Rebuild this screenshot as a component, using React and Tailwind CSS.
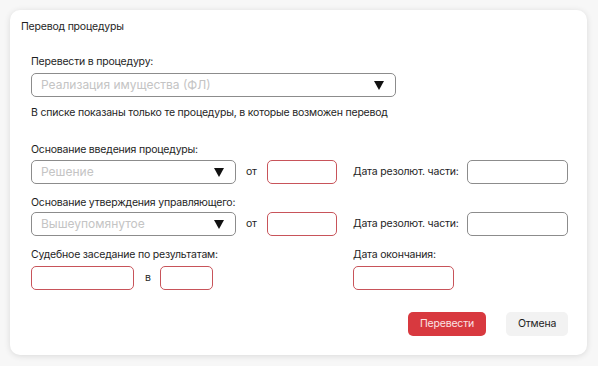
import React from "react";

const font = { fontFamily: "Inter, 'Noto Sans', sans-serif" };

function Arrow() {
  return (
    <svg width="10" height="9" viewBox="0 0 10 9" className="shrink-0">
      <path d="M0 0 H10 L5 9 Z" fill="#111" />
    </svg>
  );
}

function Select({ w, text }) {
  return (
    <div className={`${w} h-[24px] border border-[#8c8c8c] rounded-[5px] flex items-center justify-between pl-[9px] pr-[11px]`}>
      <span className="text-[12px] tracking-normal text-[#c4c4c4]">{text}</span>
      <Arrow />
    </div>
  );
}

function RedInput({ w }) {
  return <div className={`${w} h-[24px] border border-[#c8545a] rounded-[5px]`} />;
}

function GrayInput({ w }) {
  return <div className={`${w} h-[24px] border border-[#8c8c8c] rounded-[5px]`} />;
}

export default function App() {
  return (
    <div className="w-[598px] h-[366px] bg-[#f7f7f7] pt-[10px] pl-[10px]" style={font}>
      <div className="w-[577px] h-[345px] bg-white rounded-[10px] shadow-[0_1px_6px_rgba(0,0,0,0.12)] text-[#1e1e1e] text-[10.5px] tracking-[-0.2px] leading-[14px] whitespace-nowrap">
        <div className="pl-[11px] pt-[10px]">Перевод процедуры</div>
        <div className="pl-[21px]">
          <div className="mt-[21px]">Перевести в процедуру:</div>
          <div className="mt-[4px]">
            <Select w="w-[365px]" text="Реализация имущества (ФЛ)" />
          </div>
          <div className="mt-[9px]">В списке показаны только те процедуры, в которые возможен перевод</div>

          <div className="mt-[23px]">Основание введения процедуры:</div>
          <div className="mt-[3px] flex items-center">
            <Select w="w-[205px]" text="Решение" />
            <span className="ml-[10px] w-[21px]">от</span>
            <RedInput w="w-[70px]" />
            <span className="ml-[16px] w-[114px]">Дата резолют. части:</span>
            <GrayInput w="w-[101px]" />
          </div>

          <div className="mt-[12px]">Основание утверждения управляющего:</div>
          <div className="mt-[2px] flex items-center">
            <Select w="w-[205px]" text="Вышеупомянутое" />
            <span className="ml-[10px] w-[21px]">от</span>
            <RedInput w="w-[70px]" />
            <span className="ml-[16px] w-[114px]">Дата резолют. части:</span>
            <GrayInput w="w-[101px]" />
          </div>

          <div className="mt-[12px] flex">
            <div className="w-[322px]">
              <div>Судебное заседание по результатам:</div>
              <div className="mt-[4px] flex items-center">
                <RedInput w="w-[103px]" />
                <span className="ml-[11px] w-[15px]">в</span>
                <RedInput w="w-[53px]" />
              </div>
            </div>
            <div>
              <div>Дата окончания:</div>
              <div className="mt-[4px]">
                <RedInput w="w-[101px]" />
              </div>
            </div>
          </div>

          <div className="mt-[22px] flex justify-end pr-[19px] gap-[20px]">
            <div className="w-[78px] h-[24px] rounded-[5px] bg-[#d8393f] text-[#fbe3e4] flex items-center justify-center">Перевести</div>
            <div className="w-[62px] h-[24px] rounded-[5px] bg-[#f2f2f2] flex items-center justify-center">Отмена</div>
          </div>
        </div>
      </div>
    </div>
  );
}
